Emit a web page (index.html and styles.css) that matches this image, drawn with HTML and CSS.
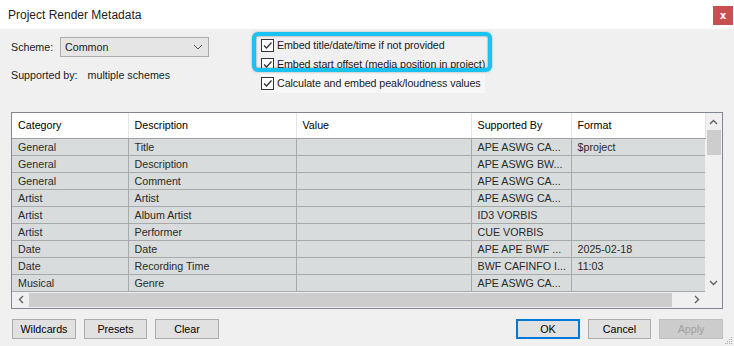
FILE: index.html
```html
<!DOCTYPE html>
<html lang="en">
<head>
    <meta charset="UTF-8">
    <title>Project Render Metadata</title>
    <link rel="stylesheet" href="styles.css">
</head>
<body>

<div class="window">
    <div class="titlebar">
        <span class="title">Project Render Metadata</span>
        <span class="close">x</span>
    </div>

    <div class="content">
        <div class="top">
            <div class="scheme-col">
                <div class="scheme-row">
                    <label>Scheme:</label>
                    <div class="select">
                        <span>Common</span>
                        <svg width="10" height="6" viewBox="0 0 10 6"><path d="M1 1 L5 5 L9 1" fill="none" stroke="#555" stroke-width="1"/></svg>
                    </div>
                </div>
                <div class="supported">
                    <span>Supported by:</span>
                    <span>multiple schemes</span>
                </div>
            </div>

            <div class="checks">
                <div class="check"><span class="box"><svg width="11" height="11" viewBox="0 0 11 11"><path d="M2 5.5 L4.5 8 L9.5 2.5" fill="none" stroke="#333" stroke-width="1.3"/></svg></span><span class="text">Embed title/date/time if not provided</span></div>
                <div class="check"><span class="box"><svg width="11" height="11" viewBox="0 0 11 11"><path d="M2 5.5 L4.5 8 L9.5 2.5" fill="none" stroke="#333" stroke-width="1.3"/></svg></span><span class="text">Embed start offset (media position in project)</span></div>
                <div class="check last"><span class="box"><svg width="11" height="11" viewBox="0 0 11 11"><path d="M2 5.5 L4.5 8 L9.5 2.5" fill="none" stroke="#333" stroke-width="1.3"/></svg></span><span class="text">Calculate and embed peak/loudness values</span></div>
                <!-- callout around the first two options -->
                <div class="highlight"></div>
            </div>
        </div>

        <div class="list">
            <div class="list-main">
                <table class="meta-table">
                    <colgroup>
                        <col style="width:116px">
                        <col style="width:168px">
                        <col style="width:175px">
                        <col style="width:100px">
                        <col style="width:134px">
                    </colgroup>
                    <thead>
                        <tr>
                            <th>Category</th>
                            <th>Description</th>
                            <th>Value</th>
                            <th>Supported By</th>
                            <th>Format</th>
                        </tr>
                    </thead>
                    <tbody>
                        <tr><td>General</td><td>Title</td><td></td><td>APE ASWG CA...</td><td>$project</td></tr>
                        <tr><td>General</td><td>Description</td><td></td><td>APE ASWG BW...</td><td></td></tr>
                        <tr><td>General</td><td>Comment</td><td></td><td>APE ASWG CA...</td><td></td></tr>
                        <tr><td>Artist</td><td>Artist</td><td></td><td>APE ASWG CA...</td><td></td></tr>
                        <tr><td>Artist</td><td>Album Artist</td><td></td><td>ID3 VORBIS</td><td></td></tr>
                        <tr><td>Artist</td><td>Performer</td><td></td><td>CUE VORBIS</td><td></td></tr>
                        <tr><td>Date</td><td>Date</td><td></td><td>APE APE BWF ...</td><td>2025-02-18</td></tr>
                        <tr><td>Date</td><td>Recording Time</td><td></td><td>BWF CAFINFO I...</td><td>11:03</td></tr>
                        <tr><td>Musical</td><td>Genre</td><td></td><td>APE ASWG CA...</td><td></td></tr>
                    </tbody>
                </table>
                <div class="vscroll">
                    <div class="arrow"><svg width="9" height="6" viewBox="0 0 9 6"><path d="M1 5 L4.5 1.5 L8 5" fill="none" stroke="#606060" stroke-width="1.4"/></svg></div>
                    <div class="vthumb"></div>
                    <div class="vtrack"></div>
                    <div class="arrow"><svg width="9" height="6" viewBox="0 0 9 6"><path d="M1 1 L4.5 4.5 L8 1" fill="none" stroke="#606060" stroke-width="1.4"/></svg></div>
                </div>
            </div>
            <div class="list-bottom">
                <div class="hscroll">
                    <div class="harrow"><svg width="6" height="9" viewBox="0 0 6 9"><path d="M5 1 L1.5 4.5 L5 8" fill="none" stroke="#606060" stroke-width="1.4"/></svg></div>
                    <div class="hthumb"></div>
                    <div class="htrack"></div>
                    <div class="harrow"><svg width="6" height="9" viewBox="0 0 6 9"><path d="M1 1 L4.5 4.5 L1 8" fill="none" stroke="#606060" stroke-width="1.4"/></svg></div>
                </div>
                <div class="corner"></div>
            </div>
        </div>

        <div class="buttons">
            <div class="left-buttons">
                <button>Wildcards</button>
                <button>Presets</button>
                <button>Clear</button>
            </div>
            <div class="right-buttons">
                <button class="default">OK</button>
                <button>Cancel</button>
                <button class="disabled">Apply</button>
            </div>
        </div>
    </div>

    <svg class="grip" width="9" height="9" viewBox="0 0 9 9">
        <rect x="7" y="1" width="1" height="1" fill="#aaa"/>
        <rect x="5" y="3" width="1" height="1" fill="#aaa"/>
        <rect x="7" y="3" width="1" height="1" fill="#aaa"/>
        <rect x="3" y="5" width="1" height="1" fill="#aaa"/>
        <rect x="5" y="5" width="1" height="1" fill="#aaa"/>
        <rect x="7" y="5" width="1" height="1" fill="#aaa"/>
        <rect x="1" y="7" width="1" height="1" fill="#aaa"/>
        <rect x="3" y="7" width="1" height="1" fill="#aaa"/>
        <rect x="5" y="7" width="1" height="1" fill="#aaa"/>
        <rect x="7" y="7" width="1" height="1" fill="#aaa"/>
    </svg>
</div>

</body>
</html>
```

FILE: styles.css
```css
body {
    margin: 0;
    padding: 0;
    font-family: "Liberation Sans", Arial, sans-serif;
    font-size: 10.7px;
    color: #1a1a1a;
    background: #f0f0f0;
}
.window {
    position: relative;
    width: 734px;
    height: 346px;
    background: #f0f0f0;
    overflow: hidden;
}
.titlebar {
    height: 29px;
    background: #fff;
    display: flex;
    justify-content: space-between;
    align-items: flex-start;
    padding-left: 8px;
}
.title {
    font-size: 12px;
    color: #1c1c1c;
    margin-top: 8px;
}
.close {
    width: 20px;
    height: 19px;
    margin-top: 6px;
    margin-right: 1px;
    background: #c75050;
    color: #fff;
    font-weight: bold;
    font-size: 11px;
    font-family: "DejaVu Sans Mono", monospace;
    display: flex;
    align-items: center;
    justify-content: center;
}
.content {
    padding: 7px 11px 0 11px;
}
.top {
    display: flex;
    height: 76px;
}
.scheme-col {
    width: 250px;
}
.scheme-row {
    display: flex;
    align-items: center;
    margin-top: 1px;
}
.scheme-row label {
    width: 49px;
}
.select {
    height: 18px;
    border: 1px solid #adadad;
    background: #e5e5e5;
    display: flex;
    align-items: center;
    justify-content: space-between;
    padding: 0 5px 0 4px;
    width: 138px;
}
.supported {
    margin-top: 12px;
    display: flex;
    gap: 10px;
}
.checks {
    position: relative;
    display: flex;
    flex-direction: column;
    align-items: flex-start;
}
.check {
    height: 19px;
    display: flex;
    align-items: center;
    gap: 3px;
    letter-spacing: -0.08px;
}
.check .text {
    margin-top: -2px;
}
.check.last {
    background: #f7f7f7;
    padding-right: 4px;
}
.box {
    width: 11px;
    height: 11px;
    border: 1px solid #333;
    background: #fff;
    display: flex;
}
.highlight {
    position: absolute;
    left: -9px;
    top: -4px;
    width: 232px;
    height: 32px;
    border: 4px solid #19c2f2;
    border-radius: 6px;
    box-shadow: inset 0 0 2px rgba(0, 0, 0, 0.55), 0 0 2px rgba(0, 0, 0, 0.35);
}
.list {
    border: 1px solid #828790;
    background: #f0f0f0;
    width: 710px;
}
.list-main {
    display: flex;
}
.meta-table {
    width: 693px;
    table-layout: fixed;
    border-collapse: collapse;
}
.meta-table th {
    height: 25px;
    padding: 0 0 0 6px;
    text-align: left;
    font-weight: normal;
    color: #000;
    background: #fff;
    border-right: 1px solid #e5e5e5;
    border-bottom: 1px solid #a0a0a0;
    box-sizing: border-box;
}
.meta-table td {
    height: 17px;
    padding: 0 0 0 6px;
    background: #d9dcdc;
    color: #2a2a2a;
    border: 1px solid #a7aaaa;
    border-top: none;
    box-sizing: border-box;
    white-space: nowrap;
    overflow: hidden;
}
.meta-table td:first-child {
    border-left: none;
}
.meta-table td:last-child {
    border-right: none;
}
.vscroll {
    width: 17px;
    display: flex;
    flex-direction: column;
    background: #f0f0f0;
}
.arrow {
    height: 17px;
    display: flex;
    align-items: center;
    justify-content: center;
}
.vthumb {
    height: 25px;
    margin: 0 1px;
    background: #cdcdcd;
}
.vtrack {
    flex: 1;
}
.list-bottom {
    display: flex;
    height: 16px;
}
.hscroll {
    width: 693px;
    display: flex;
    background: #f0f0f0;
}
.harrow {
    width: 17px;
    display: flex;
    align-items: center;
    justify-content: center;
}
.hthumb {
    width: 643px;
    margin: 1px 0;
    background: #cdcdcd;
}
.htrack {
    flex: 1;
}
.corner {
    flex: 1;
    background: #f0f0f0;
}
.buttons {
    display: flex;
    justify-content: space-between;
    margin-top: 10px;
    padding-left: 1px;
}
.left-buttons, .right-buttons {
    display: flex;
    gap: 8px;
}
button {
    width: 64px;
    height: 20px;
    padding: 0;
    font-family: "Liberation Sans", Arial, sans-serif;
    font-size: 10.7px;
    color: #000;
    background: #e1e1e1;
    border: 1px solid #adadad;
    border-radius: 0;
}
.left-buttons button:nth-child(2) {
    width: 63px;
}
.right-buttons button:nth-child(2) {
    width: 63px;
}
button.default {
    border: 2px solid #0078d7;
}
button.disabled {
    color: #a0a0a0;
    background: #cccccc;
    border-color: #bfbfbf;
}
.grip {
    position: absolute;
    right: 1px;
    bottom: 1px;
}
```
